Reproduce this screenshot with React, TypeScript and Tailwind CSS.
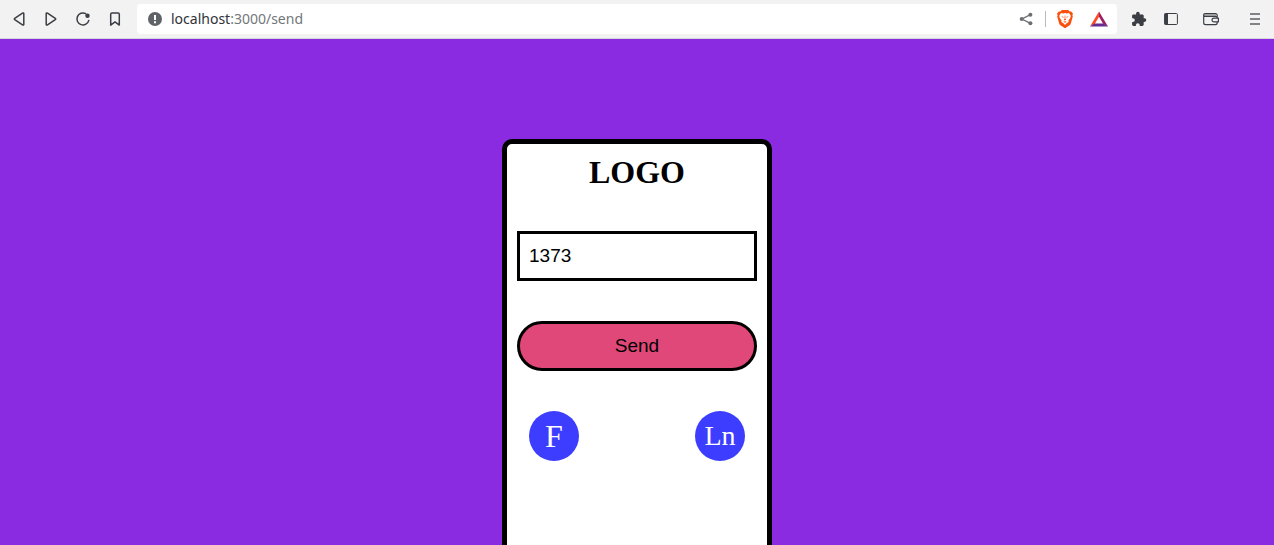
import { useState } from 'react';
import type { ReactNode } from 'react';

function ToolbarButton({ label, children }: { label: string; children: ReactNode }) {
  return (
    <button type="button" aria-label={label} className="flex size-4 shrink-0 items-center justify-center text-[#3b3e44]">
      {children}
    </button>
  );
}

const line = { fill: 'none', stroke: 'currentColor', strokeWidth: 1.5, strokeLinejoin: 'round', strokeLinecap: 'round' } as const;

function Glyph({ children }: { children: ReactNode }) {
  return (
    <svg viewBox="0 0 16 16" className="size-4 shrink-0" aria-hidden="true">
      {children}
    </svg>
  );
}

function BraveLion() {
  return (
    <svg viewBox="0 0 16 18" className="h-[18px] w-4" aria-hidden="true">
      <path d="M4.9 0h6.2l1.5 1.6 1.5-.2L16 3.4l-.6 1.6.4 1.4-2 7.2c-.2.8-.6 1.3-1.2 1.7L8.8 17.700c-.5.4-1.100.4-1.600 0L3.400 15.300c-.6-.4-1-.9-1.200-1.700l-2-7.200L.6 5 0 3.400l1.900-2 1.500.2z" fill="#fb4f0c" />
      <path d="M4 3l2.200.4L8 2.900l1.800.5L12 3l1.800 2.700-.6 2.300-1.700 2.400.2 1.500-1.800 1.200L8 14.900l-1.900-1.800-1.800-1.200.2-1.500L2.800 8l-.6-2.300z" fill="#fff" />
      <path d="M4.300 6.300l2.600.6-.9.900zM11.700 6.300l-2.600.6.9.9zM7.700 5.500h.6l.1 3.300.9.8L8 10.500l-1.300-.9.9-.8zM6.300 11.700L8 11.200l1.700.5L8 12.800z" fill="#fb4f0c" />
    </svg>
  );
}

function BrowserBar() {
  return (
    <header className="flex h-[39px] shrink-0 items-center border-b border-[#d5d7d9] bg-[#f2f2f2] px-[11px]">
      <nav className="flex gap-4" aria-label="Browser navigation">
        <ToolbarButton label="Back">
          <Glyph><path {...line} d="M12.800 2.800v10.400c0 .8-.7 1.100-1.300.7L3.700 8.700c-.5-.4-.5-1 0-1.400l7.800-5.200c.6-.4 1.300-.1 1.300.7z" /></Glyph>
        </ToolbarButton>
        <ToolbarButton label="Forward">
          <Glyph><path {...line} d="M3.200 2.800v10.400c0 .8.7 1.100 1.300.7l7.800-5.200c.5-.4.5-1 0-1.400L4.500 2.100c-.6-.4-1.300-.1-1.300.7z" /></Glyph>
        </ToolbarButton>
        <ToolbarButton label="Reload">
          <Glyph>
            <path {...line} d="M13.800 9.400A6 6 0 1 1 10.700 2.600" />
            <circle cx="12.500" cy="4.700" r="2.200" fill="currentColor" />
          </Glyph>
        </ToolbarButton>
        <ToolbarButton label="Bookmark">
          <Glyph><path {...line} d="M3.700 3.200c0-.8.500-1.300 1.300-1.300h6c.8 0 1.300.5 1.300 1.300v10.900L8 10.900l-4.300 3.200z" /></Glyph>
        </ToolbarButton>
      </nav>

      <div className="mx-3.5 flex h-[30px] min-w-0 flex-1 items-center rounded bg-white pr-[9px] pl-[11px]">
        <svg viewBox="0 0 14 14" className="size-3.5 shrink-0" aria-hidden="true">
          <circle cx="7" cy="7" r="7" fill="#5f6368" />
          <path d="M6 3h2v5H6zM6 9.200h2v2H6z" fill="#fff" />
        </svg>
        <a href="#send" className="ml-[9px] min-w-0 flex-1 truncate font-['Noto_Sans',sans-serif] text-sm leading-5 text-[#737679]">
          <span className="text-[#303238]">localhost</span>:3000/send
        </a>
        <button type="button" aria-label="Share" className="text-[#6b6e72]">
          <Glyph>
            <path d="M12.500 3.700L3.800 8l8.700 4.300" fill="none" stroke="currentColor" strokeWidth="1.300" />
            <circle cx="12.400" cy="3.700" r="2" fill="currentColor" />
            <circle cx="3.700" cy="8" r="2" fill="currentColor" />
            <circle cx="12.400" cy="12.300" r="2" fill="currentColor" />
          </Glyph>
        </button>
        <span className="ml-[11px] h-4 w-px bg-[#b9bbbd]" />
        <button type="button" aria-label="Brave Shields" className="ml-[11px]">
          <BraveLion />
        </button>
        <button type="button" aria-label="Brave Rewards" className="ml-[17px]">
          <svg viewBox="0 0 18 16" className="h-4 w-[18px]" aria-hidden="true">
            <path d="M9 .5L0 15.500l4.700-2.500L9 5.800z" fill="#ff4724" />
            <path d="M9 .5l9 15-4.700-2.500L9 5.800z" fill="#9e1f63" />
            <path d="M0 15.500l4.500-2.900h9L18 15.500z" fill="#662d91" />
          </svg>
        </button>
      </div>

      <div className="flex items-center">
        <ToolbarButton label="Extensions">
          <Glyph><path fill="currentColor" d="M13.500 7.300h-.8V4.700c0-.7-.6-1.300-1.300-1.300H8.700v-.8a1.800 1.800 0 0 0-3.600 0v.8H2.400c-.7 0-1.300.6-1.300 1.300v2.500h.8a1.900 1.900 0 0 1 0 3.800h-.8v2.600c0 .7.600 1.300 1.300 1.300h2.500v-.8a1.900 1.900 0 0 1 3.800 0v.8h2.700c.7 0 1.300-.6 1.300-1.300v-2.700h.8a1.800 1.800 0 0 0 0-3.600z" /></Glyph>
        </ToolbarButton>
        <span className="ml-4 flex">
          <ToolbarButton label="Sidebar">
            <Glyph>
              <rect x="1.600" y="2.500" width="12.800" height="11" rx="1" fill="none" stroke="currentColor" strokeWidth="1" />
              <path d="M1.500 2.500H5v11H1.500z" fill="currentColor" />
            </Glyph>
          </ToolbarButton>
        </span>
        <span className="ml-6 flex">
          <ToolbarButton label="Wallet">
            <Glyph>
              <path d="M1 3.500h12v2H2z" fill="#96989b" />
              <path {...line} strokeWidth={1.200} d="M14.200 6.500V4.300c0-1-.7-1.700-1.700-1.700H2C1.200 2.600.7 3 .7 3.700v8c0 1.200.8 1.900 1.900 1.900h9.700c1.100 0 1.900-.8 1.900-1.900v-.9M.9 4.500c.3.700.8 1 1.500 1h10.800c.6 0 1 .3 1 1M15.400 7.200h-4.600a1.800 1.800 0 0 0 0 3.600h4.600z" />
            </Glyph>
          </ToolbarButton>
        </span>
        <span className="ml-7 flex">
          <ToolbarButton label="Menu">
            <Glyph><path d="M3 3h10M3 8h10M3 13h10" fill="none" stroke="#5b5d61" strokeWidth="1.700" /></Glyph>
          </ToolbarButton>
        </span>
      </div>
    </header>
  );
}

export default function App() {
  const [code, setCode] = useState('1373');

  return (
    <div className="flex h-screen flex-col overflow-hidden bg-[#8a2be2]">
      <BrowserBar />
      <main className="flex flex-1 items-start justify-center pt-[100px] text-black">
        <form
          onSubmit={(event) => event.preventDefault()}
          className="flex min-h-[500px] w-[270px] flex-col gap-10 rounded-[10px] border-[5px] border-black bg-white p-2.5"
        >
          <h1 className="text-center font-['Liberation_Serif',serif] text-[32px] leading-[37px] font-bold">LOGO</h1>
          <input
            aria-label="Code"
            value={code}
            onChange={(event) => setCode(event.target.value)}
            className="h-[50px] w-full border-[3px] border-black bg-white px-[9px] font-['Liberation_Sans',sans-serif] text-[19px] outline-none"
          />
          <button
            type="submit"
            className="h-[50px] w-full rounded-full border-[3px] border-black bg-[#e0487a] font-['Liberation_Sans',sans-serif] text-[19px]"
          >
            Send
          </button>
          <div className="flex justify-between px-3 font-['Liberation_Serif',serif] text-white">
            <a href="#facebook" className="flex size-[50px] items-center justify-center rounded-full bg-[#3d3dff] text-[32px]">F</a>
            <a href="#linkedin" className="flex size-[50px] items-center justify-center rounded-full bg-[#3d3dff] text-[28px]">Ln</a>
          </div>
        </form>
      </main>
    </div>
  );
}
